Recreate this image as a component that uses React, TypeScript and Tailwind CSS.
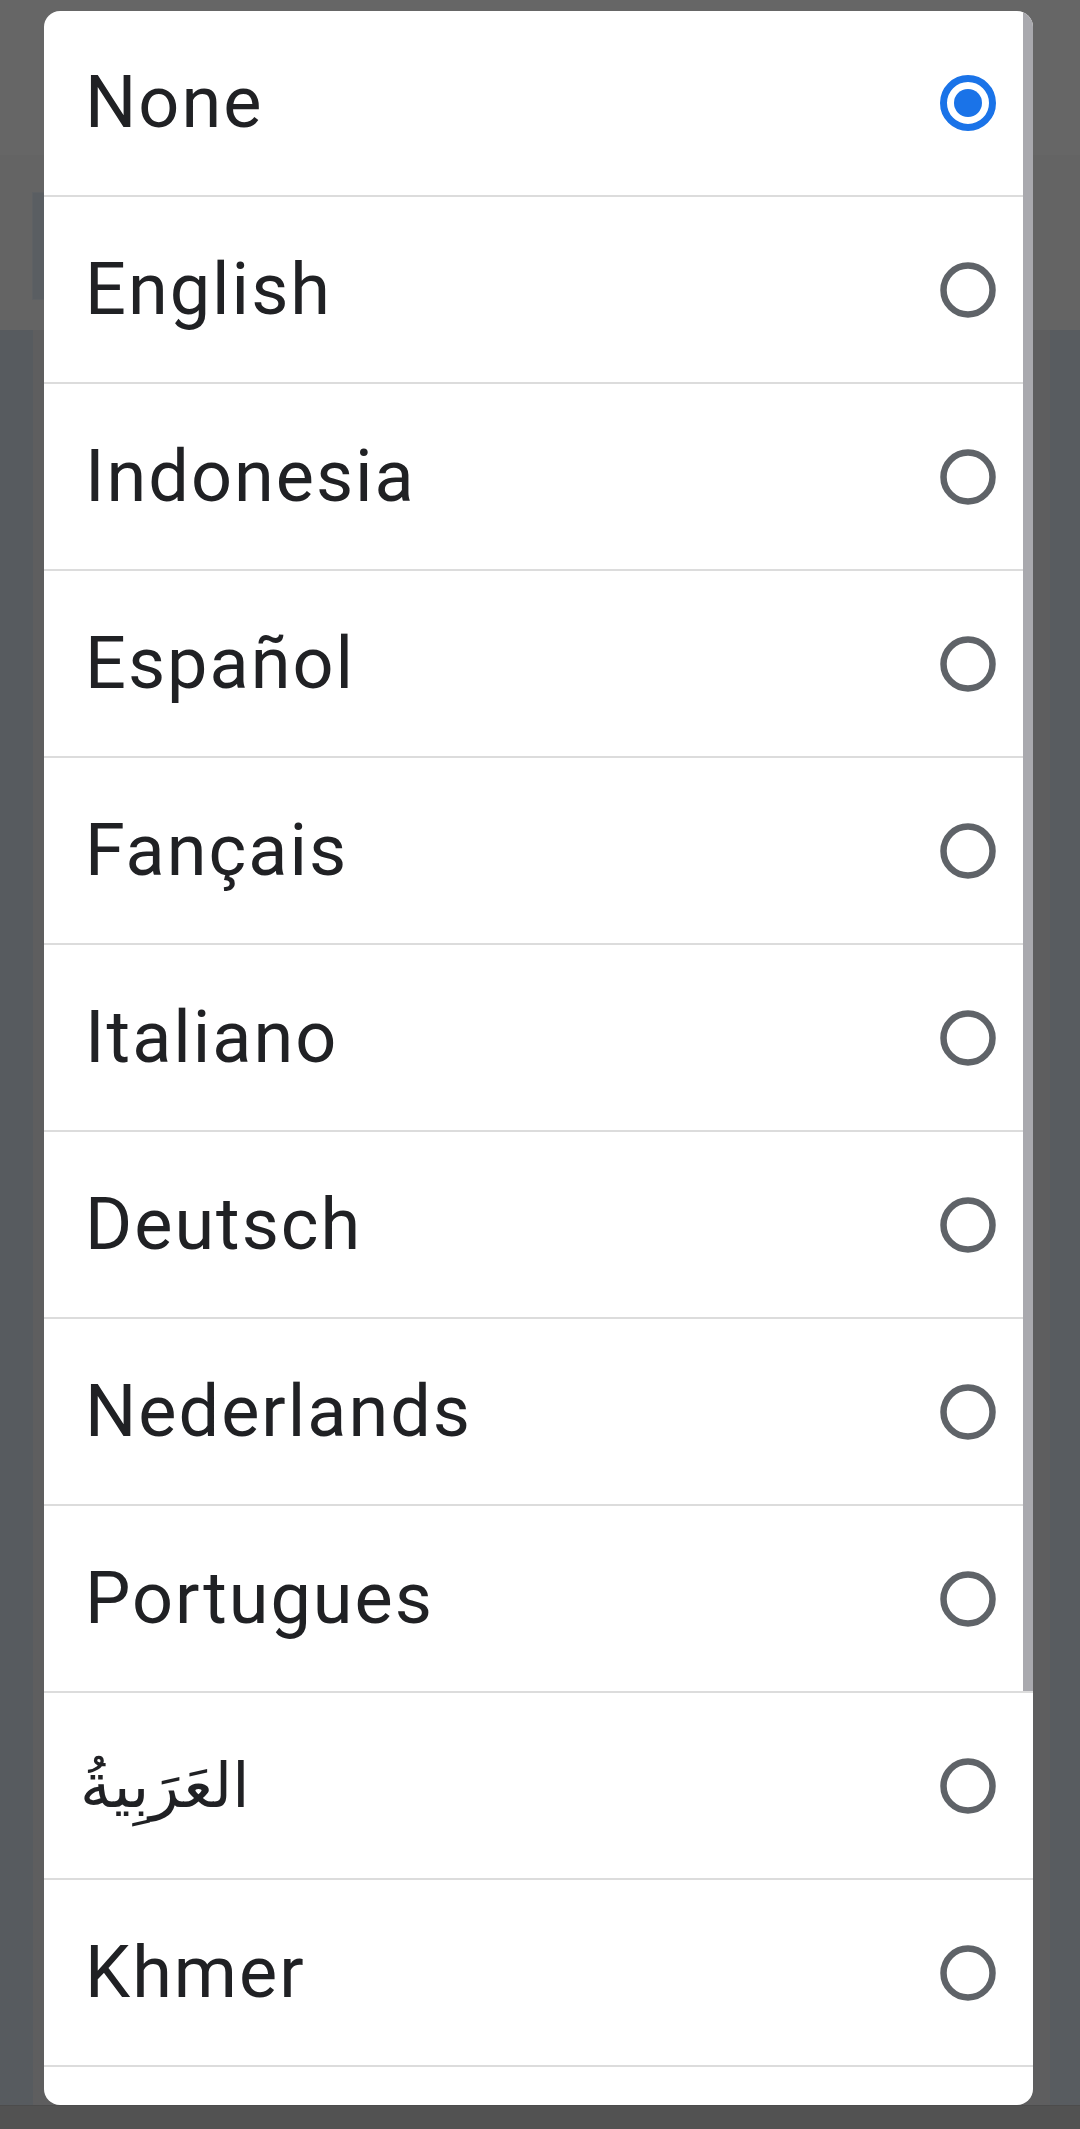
import React from "react";

const langs = [
  "None",
  "English",
  "Indonesia",
  "Español",
  "Fançais",
  "Italiano",
  "Deutsch",
  "Nederlands",
  "Portugues",
  "العَرَبِيةُ",
  "Khmer",
  "",
];

function Radio({ checked }: { checked: boolean }) {
  return checked ? (
    <svg width="56" height="56" viewBox="0 0 56 56">
      <circle cx="28" cy="28" r="24.5" fill="none" stroke="#1a73e8" strokeWidth="7" />
      <circle cx="28" cy="28" r="14" fill="#1a73e8" />
    </svg>
  ) : (
    <svg width="56" height="56" viewBox="0 0 56 56">
      <circle cx="28" cy="28" r="24.5" fill="none" stroke="#5f6368" strokeWidth="6.5" />
    </svg>
  );
}

export default function App() {
  return (
    <div className="relative w-[1080px] h-[2129px] overflow-hidden bg-[#585c60] flex flex-col" style={{ fontFamily: "Roboto, 'Liberation Sans', sans-serif" }}>
      {/* dimmed page beneath */}
      <div className="h-[155px] bg-[#666666] shrink-0" />
      <div className="h-[175px] bg-[#646464] shrink-0 flex">
        <div className="w-[32px]" />
        <div className="mt-[37px] w-[30px] h-[108px] bg-[#5a5e62] border border-[#5e6164]" />
      </div>
      <div className="flex-1 flex">
        <div className="w-[33px] bg-[#575b5f]" />
        <div className="flex-1 bg-[#5e5e5f]" />
        <div className="w-[30px] bg-[#585c60]" />
      </div>
      <div className="h-[24px] bg-[#525252] shrink-0 border-t border-[#4c4c4c]" />

      {/* dialog */}
      <div className="absolute left-[44px] top-[11px] w-[989px] h-[2094px] bg-white rounded-[16px] overflow-hidden">
        <div className="flex flex-col">
          {langs.map((l, i) => (
            <div
              key={i}
              className={
                i === 0
                  ? "h-[186px] shrink-0 border-b-2 border-[#dcdcdc] flex items-center justify-between pl-[41px] pr-[37px]"
                  : "h-[187px] shrink-0 border-b-2 border-[#dcdcdc] flex items-center justify-between pl-[41px] pr-[37px]"
              }
            >
              {i === 9 ? (
                <span
                  className="text-[62px] leading-none text-[#202124] -ml-[5px]"
                  style={{ fontFamily: "'DejaVu Sans', sans-serif" }}
                >
                  {l}
                </span>
              ) : (
                <span className="text-[72px] leading-none tracking-[2px] text-[#202124]">{l}</span>
              )}
              {l !== "" && <Radio checked={i === 0} />}
            </div>
          ))}
        </div>
        <div className="absolute right-0 top-0 w-[10px] h-[1680px] bg-[#a9a9ae]" />
      </div>
    </div>
  );
}
